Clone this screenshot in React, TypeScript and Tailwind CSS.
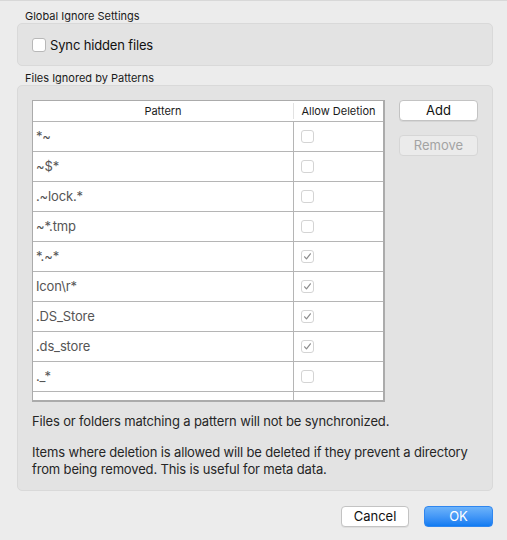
import React from "react";

const rows: { p: string; c: boolean }[] = [
  { p: "*~", c: false },
  { p: "~$*", c: false },
  { p: ".~lock.*", c: false },
  { p: "~*.tmp", c: false },
  { p: "*.~*", c: true },
  { p: "Icon\\r*", c: true },
  { p: ".DS_Store", c: true },
  { p: ".ds_store", c: true },
  { p: "._*", c: false },
  { p: "Thumbs.db", c: false },
];

function Check({ checked }: { checked: boolean }) {
  return (
    <div className="w-[13px] h-[13px] rounded-[3px] border border-[#d4d4d4] bg-white flex items-center justify-center">
      {checked && (
        <svg width="9" height="9" viewBox="0 0 9 9">
          <path d="M1.6 4.8 L3.5 6.9 L7.4 1.8" fill="none" stroke="#8c8c8c" strokeWidth="1.2" strokeLinecap="round" strokeLinejoin="round" />
        </svg>
      )}
    </div>
  );
}

export default function App() {
  return (
    <div
      className="w-[507px] h-[540px] bg-[#ececec] border-t border-[#d8d8d8] flex flex-col pl-[17px] pr-[14px] text-[#262626] overflow-hidden"
      style={{ fontFamily: 'Inter, "Liberation Sans", Arial, sans-serif' }}
    >
      <div className="mt-[8px] h-[14px] pl-[8px] text-[11px] leading-[14px] text-[#1a1a1a]">Global Ignore Settings</div>
      <div className="h-[43px] rounded-[5px] bg-[#e3e3e3] border border-[#d9d9d9] flex items-center pl-[14px] gap-[4px]">
        <div className="w-[14px] h-[14px] rounded-[3px] border border-[#b8b8b8] bg-white" />
        <span className="text-[13px] leading-[16px] text-[#111] tracking-[-0.15px]">Sync hidden files</span>
      </div>
      <div className="mt-[5px] h-[14px] pl-[8px] text-[11px] leading-[14px] text-[#1a1a1a]">Files Ignored by Patterns</div>
      <div className="h-[406px] rounded-[5px] bg-[#e3e3e3] border border-[#d9d9d9] flex flex-col pt-[14px] pl-[14px]">
        <div className="flex gap-[14px]">
          <div className="w-[353px] h-[302px] bg-white border border-[#ababab] border-r-2 border-b-2 overflow-hidden">
            <div className="flex h-[21px] border-b border-[#b5b5b5] bg-white text-[11px] text-[#1a1a1a]">
              <div className="w-[261px] flex items-center justify-center border-r border-[#e2e2e2] my-[2px]">Pattern</div>
              <div className="flex-1 flex items-center justify-center">Allow Deletion</div>
            </div>
            {rows.map((r) => (
              <div key={r.p} className="flex h-[30px] border-b border-[#b5b5b5]">
                <div className="w-[261px] border-r border-[#b5b5b5] flex items-center pl-[3px] text-[13px] text-[#555] tracking-[-0.15px]">{r.p}</div>
                <div className="flex-1 flex items-center pl-[7px]">
                  <Check checked={r.c} />
                </div>
              </div>
            ))}
          </div>
          <div className="flex flex-col gap-[14px]">
            <div className="w-[79px] h-[21px] rounded-[4px] bg-white border border-[#c3c3c3] shadow-[0_1px_0_rgba(0,0,0,0.06)] flex items-center justify-center text-[13px] text-[#111]">Add</div>
            <div className="w-[79px] h-[21px] rounded-[4px] bg-[#ebebeb] border border-[#d6d6d6] flex items-center justify-center text-[13px] text-[#a3a3a3]">Remove</div>
          </div>
        </div>
        <div className="mt-[11px] text-[13px] leading-[17px] text-[#262626] tracking-[-0.15px]">
          <p>Files or folders matching a pattern will not be synchronized.</p>
          <p className="mt-[14px] w-[450px]">Items where deletion is allowed will be deleted if they prevent a directory from being removed. This is useful for meta data.</p>
        </div>
      </div>
      <div className="mt-[15px] flex justify-end gap-[15px]">
        <div className="w-[68px] h-[21px] rounded-[4px] bg-white border border-[#c3c3c3] shadow-[0_1px_0_rgba(0,0,0,0.06)] flex items-center justify-center text-[13px] text-[#111]">Cancel</div>
        <div className="w-[69px] h-[21px] rounded-[4px] bg-gradient-to-b from-[#6cb3fa] to-[#0d7bf2] border border-[#2f86ef] flex items-center justify-center text-[13px] text-white">OK</div>
      </div>
    </div>
  );
}
